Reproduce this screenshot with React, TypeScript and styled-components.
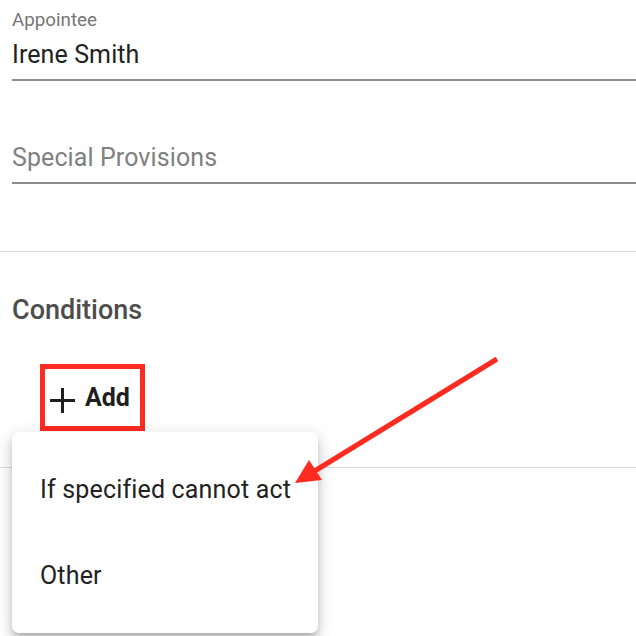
import React from "react";
import styled, { createGlobalStyle } from "styled-components";

const GlobalStyle = createGlobalStyle`
  html, body {
    margin: 0;
    padding: 0;
    background: #ffffff;
    overflow: hidden;
  }
  body {
    font-family: Roboto, "Liberation Sans", Arial, sans-serif;
  }
  * { box-sizing: border-box; }
`;

const Page = styled.div`
  position: relative;
  width: 636px;
  height: 636px;
  padding-top: 9px;
  display: flex;
  flex-direction: column;
  background: #fff;
  overflow: hidden;
`;

const Fields = styled.div`
  display: flex;
  flex-direction: column;
  padding-left: 12px;
`;

const Field = styled.div<{ $offset?: number }>`
  display: flex;
  flex-direction: column;
  margin-top: ${(p) => p.$offset ?? 0}px;
  border-bottom: 2px solid #8d8d8d;
  padding-bottom: 9px;
`;

const Label = styled.label`
  height: 22px;
  font-size: 18.75px;
  line-height: 22px;
  color: #777777;
  margin-bottom: 9px;
`;

const Input = styled.input`
  display: block;
  width: 100%;
  height: 30px;
  border: none;
  outline: none;
  padding: 0;
  margin: 0;
  background: transparent;
  font-family: Roboto, "Liberation Sans", Arial, sans-serif;
  font-size: 25px;
  line-height: 30px;
  letter-spacing: 0.1px;
  color: #222222;
  &::placeholder {
    color: #808080;
    opacity: 1;
  }
`;

const Divider = styled.hr<{ $offset: number }>`
  margin: ${(p) => p.$offset}px 0 0;
  border: none;
  height: 1px;
  background: #dadada;
`;

const SectionTitle = styled.h2`
  margin: 42px 0 0 12px;
  font-size: 27px;
  line-height: 32px;
  font-weight: 500;
  color: #4d4d4d;
`;

const AddHighlight = styled.div`
  align-self: flex-start;
  margin: 38px 0 0 40px;
  border: 5px solid #fe2b20;
  height: 67px;
  width: 105px;
  display: flex;
`;

const AddButton = styled.button`
  display: inline-flex;
  align-items: center;
  gap: 10px;
  padding: 0 0 0 5px;
  border: none;
  background: transparent;
  font-family: Roboto, "Liberation Sans", Arial, sans-serif;
  font-size: 25px;
  font-weight: 700;
  color: #1f1f1f;
  cursor: pointer;
`;

const PlusIcon = styled.svg`
  width: 25px;
  height: 25px;
  margin-top: 5px;
  flex-shrink: 0;
`;

const Menu = styled.ul`
  position: absolute;
  top: 432px;
  left: 12px;
  width: 306px;
  height: 201px;
  margin: 0;
  padding: 15px 0 14px;
  list-style: none;
  background: #fff;
  border-radius: 7px;
  box-shadow: 0 5px 6px -3px rgba(0, 0, 0, 0.2), 0 8px 12px 1px rgba(0, 0, 0, 0.12),
    0 3px 16px 2px rgba(0, 0, 0, 0.1);
`;

const MenuItem = styled.li`
  height: 86px;
  display: flex;
  align-items: center;
  padding-left: 28px;
  font-size: 25px;
  line-height: 30px;
  letter-spacing: 0.17px;
  color: #222222;
`;

const Annotation = styled.svg`
  position: absolute;
  left: 0;
  top: 0;
  width: 636px;
  height: 636px;
  pointer-events: none;
`;

export default function App() {
  return (
    <>
      <GlobalStyle />
      <Page>
        <Fields>
          <Field>
            <Label>Appointee</Label>
            <Input defaultValue="Irene Smith" readOnly />
          </Field>
          <Field $offset={31}>
            <Label />
            <Input placeholder="Special Provisions" readOnly />
          </Field>
        </Fields>
        <Divider $offset={67} />
        <SectionTitle>Conditions</SectionTitle>
        <AddHighlight>
          <AddButton>
            <PlusIcon viewBox="0 0 25 25">
              <path d="M12.5 0 V25 M0 12.5 H25" stroke="#1f1f1f" strokeWidth="3" fill="none" />
            </PlusIcon>
            Add
          </AddButton>
        </AddHighlight>
        <Divider $offset={36} />
        <Menu>
          <MenuItem>If specified cannot act</MenuItem>
          <MenuItem>Other</MenuItem>
        </Menu>
        <Annotation viewBox="0 0 636 636">
          <line x1="497" y1="359" x2="313" y2="472" stroke="#fe2b20" strokeWidth="5" />
          <polygon points="295,483 309,460 322,480" fill="#fe2b20" />
        </Annotation>
      </Page>
    </>
  );
}
